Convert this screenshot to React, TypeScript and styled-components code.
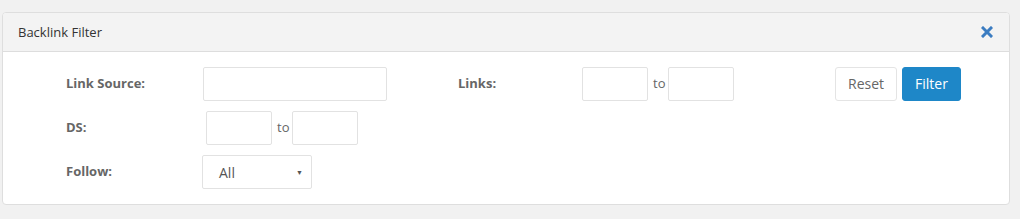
import React from "react";
import styled, { createGlobalStyle } from "styled-components";

const Global = createGlobalStyle`
  html, body { margin: 0; padding: 0; background: #f1f1f1; }
  body { font-family: "Open Sans", "Noto Sans", Arial, sans-serif; }
  * { box-sizing: border-box; }
`;

const Page = styled.div`
  width: 1020px;
  height: 219px;
  padding: 12px 10px 0 2px;
`;

const Panel = styled.div`
  width: 1008px;
  height: 193px;
  background: #fff;
  border: 1px solid #dedede;
  border-radius: 4px;
  overflow: hidden;
`;

const Header = styled.div`
  height: 39px;
  background: #f3f3f3;
  border-bottom: 1px solid #dddddd;
  display: flex;
  align-items: center;
  justify-content: space-between;
  padding: 0 16px 0 15px;
`;

const Title = styled.div`
  font-size: 13px;
  color: #333;
`;

const CloseBtn = styled.button`
  border: 0;
  background: none;
  padding: 0;
  width: 12px;
  height: 12px;
  display: flex;
  cursor: pointer;
`;

const Body = styled.div`
  padding: 15px 0 0 63px;
  display: grid;
  grid-template-columns: 136px 256px 124px 253px auto;
  grid-auto-rows: 34px;
  row-gap: 10px;
  align-items: center;
`;

const Label = styled.label`
  font-size: 13px;
  font-weight: 700;
  color: #666;
  margin-top: -2px;
`;

const Field = styled.div<{ $shift?: number }>`
  display: flex;
  align-items: center;
  margin-left: ${(p) => p.$shift ?? 0}px;
`;

const TextInput = styled.input<{ $w: number }>`
  width: ${(p) => p.$w}px;
  height: 34px;
  border: 1px solid #e2e2e2;
  border-radius: 2px;
  padding: 0 8px;
  font-family: inherit;
  font-size: 14px;
  outline: none;
`;

const To = styled.span`
  font-size: 13px;
  color: #666;
  margin: 0 3px 0 5px;
  padding-bottom: 2px;
`;

const Buttons = styled.div`
  display: flex;
  gap: 5px;
`;

const Btn = styled.button<{ $primary?: boolean; $w: number }>`
  width: ${(p) => p.$w}px;
  height: 34px;
  border-radius: 3px;
  font-family: inherit;
  font-size: 14px;
  padding: 0 0 2px;
  cursor: pointer;
  border: 1px solid ${(p) => (p.$primary ? "#1e87c8" : "#e4e4e4")};
  background: ${(p) => (p.$primary ? "#1e87c8" : "#fff")};
  color: ${(p) => (p.$primary ? "#fff" : "#666")};
`;

const Select = styled.div`
  width: 110px;
  height: 34px;
  border: 1px solid #e2e2e2;
  border-radius: 2px;
  display: flex;
  align-items: center;
  justify-content: space-between;
  padding: 0 8px 0 16px;
  font-size: 14px;
  color: #555;
`;

const Arrow = styled.span`
  font-size: 7px;
  color: #555;
`;

export default function App() {
  return (
    <>
      <Global />
      <Page>
        <Panel>
          <Header>
            <Title>Backlink Filter</Title>
            <CloseBtn aria-label="close">
              <svg width="12" height="12" viewBox="0 0 12 12">
                <path
                  d="M2 2 L10 10 M10 2 L2 10"
                  stroke="#3b7cc1"
                  strokeWidth="3"
                  strokeLinecap="square"
                />
              </svg>
            </CloseBtn>
          </Header>
          <Body>
            <Label>Link Source:</Label>
            <Field $shift={1}>
              <TextInput $w={184} />
            </Field>
            <Label>Links:</Label>
            <Field>
              <TextInput $w={66} />
              <To>to</To>
              <TextInput $w={66} />
            </Field>
            <Buttons>
              <Btn $w={62}>Reset</Btn>
              <Btn $w={59} $primary>
                Filter
              </Btn>
            </Buttons>

            <Label>DS:</Label>
            <Field $shift={4}>
              <TextInput $w={66} />
              <To>to</To>
              <TextInput $w={66} />
            </Field>
            <div />
            <div />
            <div />

            <Label>Follow:</Label>
            <Field>
              <Select>
                <span>All</span>
                <Arrow>▼</Arrow>
              </Select>
            </Field>
          </Body>
        </Panel>
      </Page>
    </>
  );
}
